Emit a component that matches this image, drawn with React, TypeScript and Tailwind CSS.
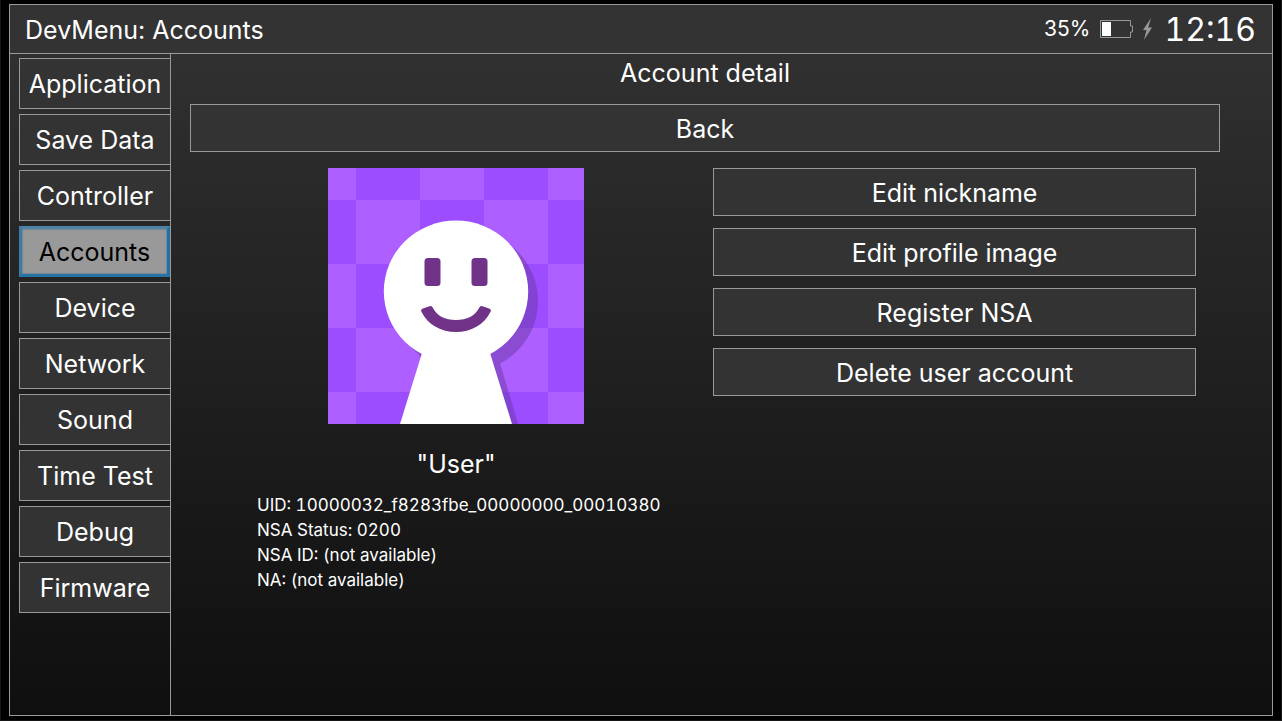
import { useState } from "react";

const tabs = [
  "Application",
  "Save Data",
  "Controller",
  "Accounts",
  "Device",
  "Network",
  "Sound",
  "Time Test",
  "Debug",
  "Firmware",
];

const actions = ["Edit nickname", "Edit profile image", "Register NSA", "Delete user account"];

const details = [
  "UID: 10000032_f8283fbe_00000000_00010380",
  "NSA Status: 0200",
  "NSA ID: (not available)",
  "NA: (not available)",
];

function Battery() {
  return (
    <svg width="33" height="18" viewBox="0 0 33 18" aria-hidden="true">
      <path d="M.5.5h30v5.500h2v6h-2v5.500h-30z" fill="none" stroke="#999" />
      <rect x="2" y="2" width="9" height="14" fill="#fff" />
    </svg>
  );
}

function Bolt() {
  return (
    <svg width="9" height="22" viewBox="0 0 9 22" aria-hidden="true">
      <path d="M8 0 0 12h3.500L1 22l8-12.500H5.200z" fill="#999" />
    </svg>
  );
}

function Avatar() {
  return (
    <svg width="256" height="256" viewBox="0 0 256 256" role="img" aria-label="Profile image">
      <defs>
        <pattern id="checks" x="28" y="32" width="128" height="128" patternUnits="userSpaceOnUse">
          <rect width="128" height="128" fill="#9b4dff" />
          <rect width="64" height="64" fill="#ad60ff" />
          <rect x="64" y="64" width="64" height="64" fill="#ad60ff" />
        </pattern>
      </defs>
      <rect width="256" height="256" fill="url(#checks)" />
      <g fill="#6c3aa6" opacity=".5">
        <ellipse cx="138" cy="133" rx="72" ry="71" />
        <path d="M104 195h68l18 61H86z" />
      </g>
      <g fill="#fff">
        <ellipse cx="128" cy="123.500" rx="72.200" ry="71" />
        <path d="M94 185h68l22 71H72z" />
      </g>
      <rect x="96.500" y="90" width="16" height="28" rx="3.500" fill="#713388" />
      <rect x="143.500" y="90" width="16" height="28" rx="3.500" fill="#713388" />
      <path
        d="M95 140.500q-2.500 1-1.700 3C100 157 113 164 128 164s28-7 34.700-20.500q.8-2-1.700-3l-6.500-2.300q-2-.7-3 1C147 148 139 152 128 152s-19-4-23.500-12.800q-1-1.700-3-1z"
        fill="#713388"
      />
    </svg>
  );
}

export default function App() {
  const [active, setActive] = useState("Accounts");

  return (
    <div className="flex min-h-screen flex-col border-x border-b border-[#161616] bg-black px-2 py-1 font-['Inter','Noto_Sans',sans-serif] text-[25px] text-white">
      <div className="flex flex-1 flex-col border border-[#999] bg-linear-to-b from-[#333] to-[#0f0f0f]">
        <header className="flex h-[49px] items-center justify-between border-b border-[#999] bg-[#333] pr-4 pl-[15px]">
          <h1 className="pt-0.5 leading-8">DevMenu: Accounts</h1>
          <div className="flex items-center">
            <span className="mr-[10px] text-[21px] leading-8">35%</span>
            <Battery />
            <span className="mr-3 ml-[10px] flex">
              <Bolt />
            </span>
            <time className="pt-0.5 text-[32px] leading-8 tabular-nums">12:16</time>
          </div>
        </header>

        <div className="flex flex-1">
          <nav className="flex w-[161px] shrink-0 flex-col gap-[5px] border-r border-[#999] pt-1 pl-[9px]">
            {tabs.map((tab) => (
              <button
                key={tab}
                type="button"
                onClick={() => setActive(tab)}
                className={
                  tab === active
                    ? "h-[51px] border-3 border-t-[#4e82a6] border-r-[#2070a6] border-b-[#2673a6] border-l-[#3c7ba6] bg-[#999] leading-8 text-black inset-shadow-[0_0_2px_#2a5f85]"
                    : "h-[51px] border-y border-l border-[#999] bg-[#333] leading-8"
                }
              >
                {tab}
              </button>
            ))}
          </nav>

          <main className="flex-1 pr-[52px] pl-[19px]">
            <h2 className="mb-3 text-center leading-[38px]">Account detail</h2>
            <button type="button" className="h-12 w-full border border-[#999] bg-[#333] pt-0.5 leading-8">
              Back
            </button>

            <div className="mt-4 flex pr-6">
              <section className="flex flex-1 flex-col items-center pl-[9px]">
                <Avatar />
                <p className="mt-5 leading-10">"User"</p>
                <ul className="mt-[9px] w-full pl-[58px] text-[17px] leading-[25px] whitespace-nowrap tabular-nums">
                  {details.map((line) => (
                    <li key={line}>{line}</li>
                  ))}
                </ul>
              </section>
              <div className="flex w-12/25 flex-col gap-3">
                {actions.map((action) => (
                  <button key={action} type="button" className="h-12 border border-[#999] bg-[#333] pt-0.5 leading-8">
                    {action}
                  </button>
                ))}
              </div>
            </div>
          </main>
        </div>
      </div>
    </div>
  );
}
